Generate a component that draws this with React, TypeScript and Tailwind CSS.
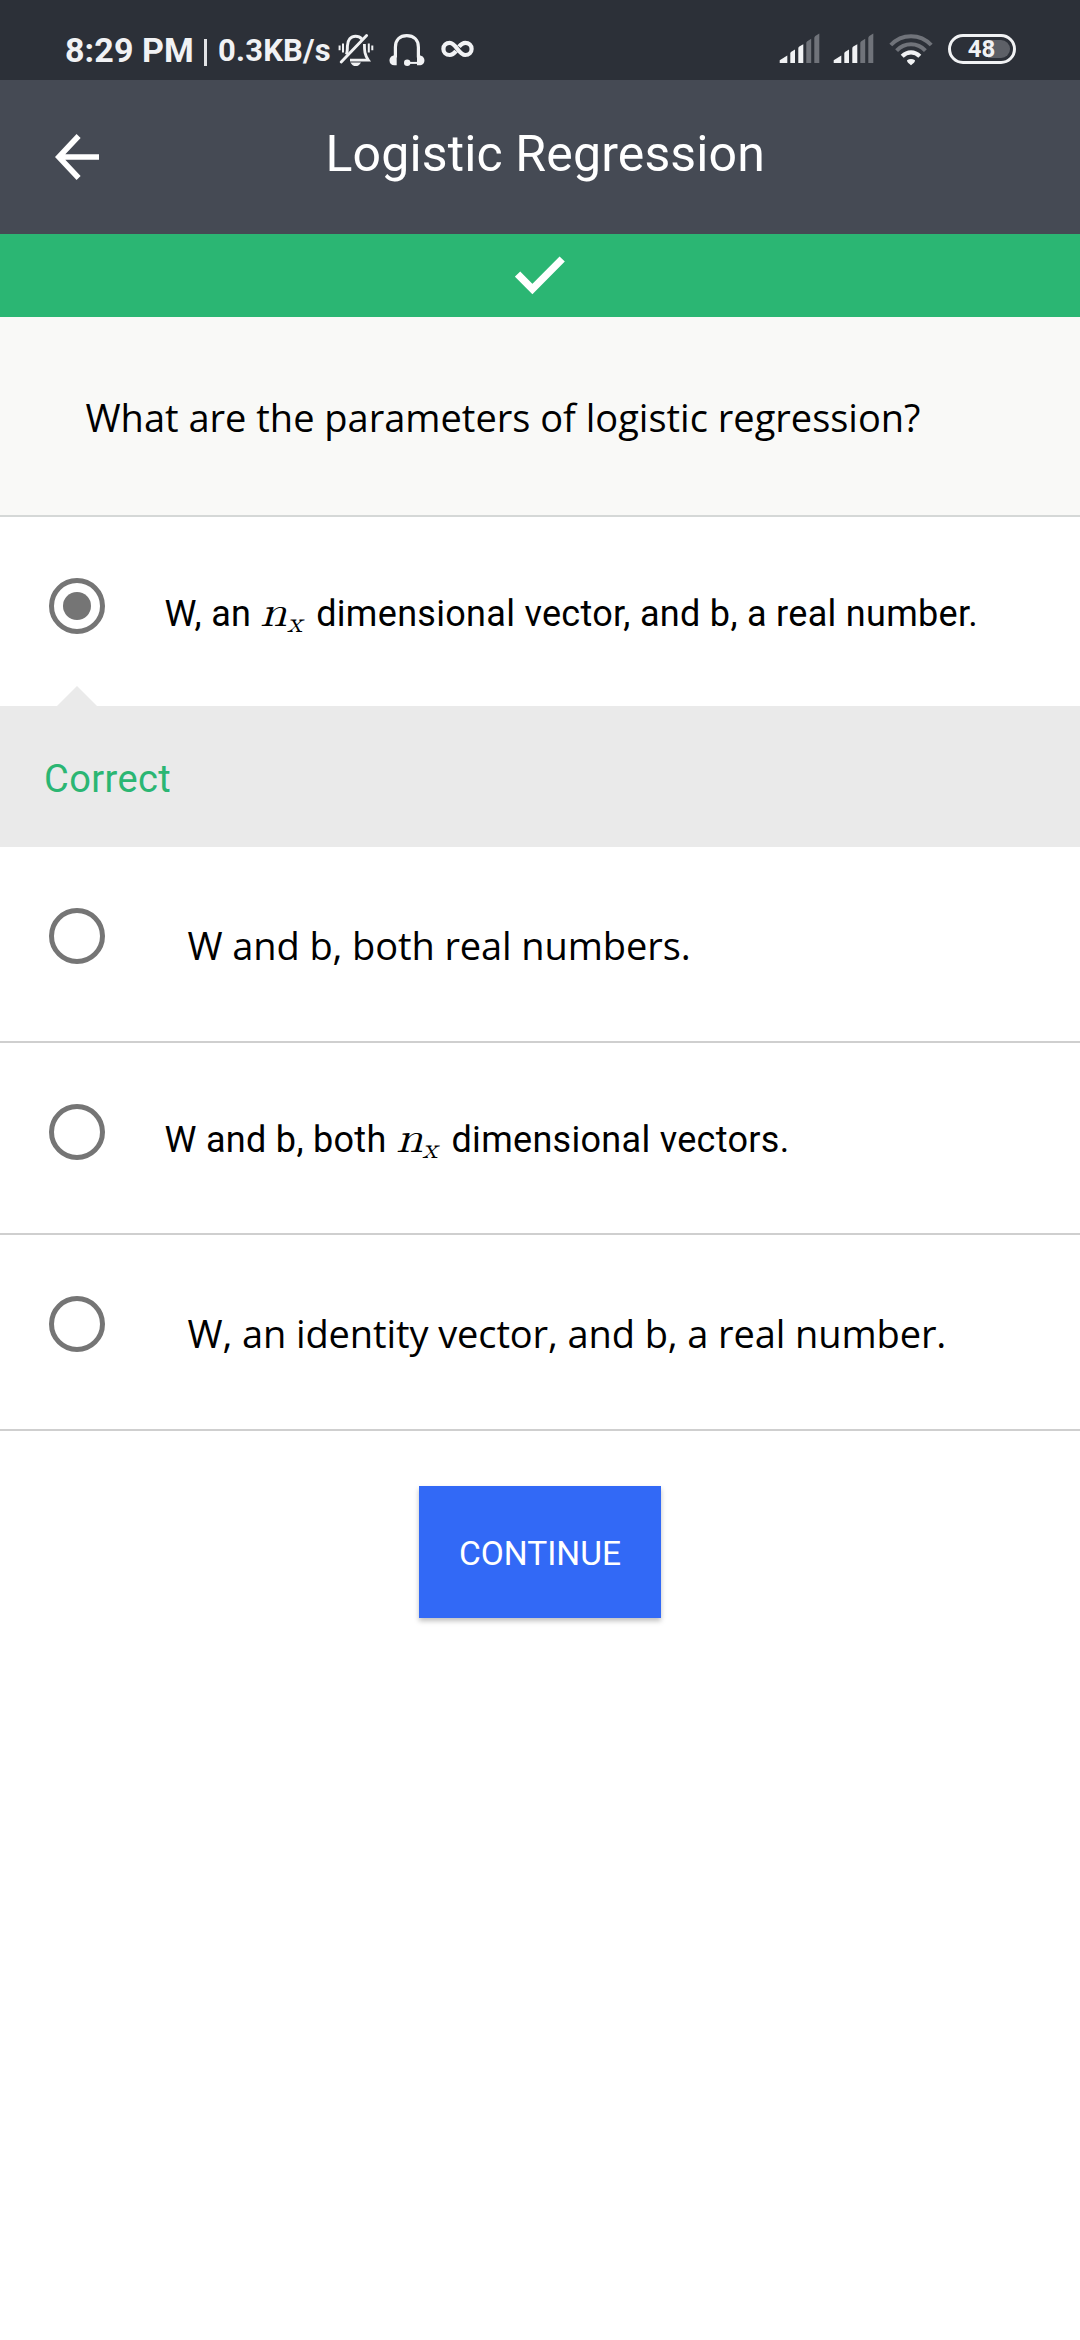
import type { ReactNode } from "react";

function SignalBars() {
  return (
    <svg width="42" height="31" viewBox="0 0 42 31">
      <path d="M0.7 30V27.2L8.3 22.6V30Z" fill="#f1f2f4" />
      <path d="M11.3 30V20.6Q11.3 19.4 12.3 18.8L16 16.6V30Z" fill="#f1f2f4" />
      <path d="M19.3 30V15.4Q19.3 14.2 20.3 13.6L24.3 11.2V30Z" fill="#f1f2f4" />
      <path d="M27.3 30V10Q27.3 8.8 28.3 8.2L32.2 5.8V30Z" fill="#70737a" />
      <path d="M35.3 30V5Q35.3 3.8 36.3 3L40.3 0.4V30Z" fill="#70737a" />
    </svg>
  );
}

function MutedBell() {
  return (
    <svg width="36" height="34" viewBox="0 0 36 34" fill="none" stroke="#f1f2f4">
      <path d="M8.4 21.5C9.4 19 9.4 16 9.4 13C9.4 6.8 13 3.2 17.6 3.2C20 3.2 22.3 4.2 23.8 6" strokeWidth="2.9" />
      <path d="M26.4 11C26.4 18 26.6 21.6 30.4 27.2H12" strokeWidth="2.8" />
      <path d="M3.2 29L28.6 2.6" strokeWidth="2.9" strokeLinecap="round" />
      <path d="M12.4 29.4H23Q21 33 17.7 33Q14.4 33 12.4 29.4Z" fill="#f1f2f4" stroke="none" />
      <path d="M1.6 12.4V17.2M5 10.4V19.4M30.8 10.4V19.4M34.3 12.4V17.2" strokeWidth="2" />
    </svg>
  );
}

function Headset() {
  return (
    <svg width="36" height="34" viewBox="0 0 36 34" fill="none" stroke="#f1f2f4">
      <path d="M6.4 24.6V14.2C6.4 6.6 11 2.6 17.8 2.6C24.6 2.6 29.4 6.6 29.4 14.2V24.6" strokeWidth="3.2" />
      <path d="M7.7 22.4V32.2H5.4C2.4 32.2 0.5 30.2 0.5 27.4C0.5 24.6 2.4 22.4 5.2 22.4Z" fill="#f1f2f4" stroke="none" />
      <path d="M28 22.4V32.2H30.4C33.4 32.2 35.4 30.2 35.4 27.4C35.4 24.6 33.4 22.4 30.6 22.4Z" fill="#f1f2f4" stroke="none" />
      <path d="M18 29.9H29" strokeWidth="2" />
      <circle cx="18.2" cy="29.8" r="3.2" fill="#f1f2f4" stroke="none" />
    </svg>
  );
}

function InfinityMark() {
  return (
    <svg width="33" height="18" viewBox="0 0 33 18" fill="none" stroke="#f1f2f4" strokeWidth="4.2">
      <path d="M15 11.2C13 13.6 11.4 15 8.8 15C5 15 2.4 12.3 2.4 8.9C2.4 5.5 5 2.8 8.8 2.8C15 2.8 17.6 15 24.2 15C28 15 30.6 12.3 30.6 8.9C30.6 5.5 28 2.8 24.2 2.8C21.6 2.8 20 4.2 18 6.6" />
    </svg>
  );
}

function Wifi() {
  return (
    <svg width="44" height="32" viewBox="0 0 44 32" fill="none">
      <path d="M1.8 11C12.8 -0.8 31.2 -0.8 42.2 11" stroke="#70737a" strokeWidth="4" />
      <path d="M7.6 16.6C15.6 8.2 28.4 8.2 36.4 16.6" stroke="#70737a" strokeWidth="4" />
      <path d="M13.2 22.2C18.4 17 25.6 17 30.8 22.2" stroke="#f1f2f4" strokeWidth="4.2" />
      <path d="M18 26.3Q22 23.6 26 26.3Q26 28.6 22 31.2Q18 28.6 18 26.3Z" fill="#f1f2f4" />
    </svg>
  );
}

function StatusBar() {
  return (
    <div className="flex h-20 items-start bg-[#2c3038] text-[#f1f2f4]">
      <span className="ml-[65px] mt-[30px] w-[131px] text-[34px] leading-[40px] font-bold tracking-[0.1px] whitespace-nowrap">
        8:29 PM
      </span>
      <span className="ml-2 mt-[39px] h-[27px] w-[3px] bg-[#e2e3e6]" />
      <span className="ml-[11px] mt-[31px] w-[112px] text-[31px] leading-[40px] font-bold tracking-[0.2px] whitespace-nowrap">
        0.3KB/s
      </span>
      <span className="ml-[8px] mt-[33px]"><MutedBell /></span>
      <span className="ml-[15px] mt-[33px]"><Headset /></span>
      <span className="ml-[16px] mt-[40px]"><InfinityMark /></span>
      <span className="ml-auto mt-[33px]"><SignalBars /></span>
      <span className="ml-[12px] mt-[33px]"><SignalBars /></span>
      <span className="ml-[14px] mt-[34px]"><Wifi /></span>
      <span className="mr-[64px] ml-[15px] mt-[34px] flex h-[30px] w-[68px] items-center justify-center rounded-full border-[3px] border-[#f1f2f4] bg-[linear-gradient(90deg,#2c3038_60%,#5d6067_60%)] bg-clip-content p-[3px] text-[24px] leading-none font-bold">
        <span className="pr-[1px]">48</span>
      </span>
    </div>
  );
}

function Radio({ checked = false }: { checked?: boolean }) {
  return (
    <span className="mt-[61px] ml-[49px] flex size-14 shrink-0 items-center justify-center rounded-full border-[5.5px] border-[#757575]">
      {checked && <span className="size-7 rounded-full bg-[#757575]" />}
    </span>
  );
}

function Nx() {
  return (
    <span className="inline-block w-[46.5px] font-['Latin_Modern_Math','Liberation_Serif',serif] tracking-normal italic">
      <span className="inline-block w-[26.5px] origin-left scale-x-[1.12] text-[43px] leading-none">n</span>
      <span className="relative top-[6px] inline-block text-[29px] leading-none">x</span>
    </span>
  );
}

type OptionProps = { checked?: boolean; row: string; text: string; children: ReactNode };

function Option({ checked, row, text, children }: OptionProps) {
  return (
    <div className={`flex items-start ${row}`}>
      <Radio checked={checked} />
      <p className={`whitespace-nowrap ${text}`}>{children}</p>
    </div>
  );
}

const roboto = "ml-[59.5px] text-[36px] tracking-[0.3px]";
const openSans = "ml-[82.5px] font-['Open_Sans',sans-serif] text-[38px] tracking-[-0.1px]";

export default function App() {
  return (
    <div className="flex h-[2340px] w-[1080px] flex-col bg-white font-['Roboto',sans-serif] text-black">
      <StatusBar />
      <header className="flex h-[154px] items-center bg-[#454a54] text-white">
        <svg className="ml-[55px]" width="46" height="46" viewBox="0 0 46 46" fill="none" stroke="currentColor" strokeWidth="5.6">
          <path d="M44 23H5M23.6 2L3.8 23L23.6 44" />
        </svg>
        <h1 className="ml-[224.5px] pb-[7px] text-[50px] leading-[60px] tracking-[0.14px] whitespace-nowrap">Logistic Regression</h1>
      </header>
      <div className="flex h-[83px] items-center justify-center bg-[#2bb673]">
        <svg width="50" height="40" viewBox="0 0 50 40" fill="none" stroke="#fff" strokeWidth="7.4">
          <path d="M2.6 18L17.4 33L47.2 3" />
        </svg>
      </div>
      <div className="flex h-[200px] items-center border-b-2 border-[#d5d8d7] bg-[#f9f9f7] pt-[2px] pl-[85.5px]">
        <p className="font-['Open_Sans',sans-serif] text-[38px] leading-[52px] whitespace-nowrap">
          What are the parameters of logistic regression?
        </p>
      </div>
      <Option checked row="h-[189px]" text={`${roboto} leading-[195px]`}>
        W, an <Nx /> dimensional vector, and b, a real number.
      </Option>
      <div className="relative flex h-[141px] items-center bg-[#eaeaea] pt-[4px] pl-[44px]">
        <svg className="absolute -top-5 left-[57px]" width="40" height="20" viewBox="0 0 40 20">
          <path d="M20 0L40 20H0Z" fill="#eaeaea" />
        </svg>
        <p className="text-[38px] leading-[46px] tracking-[0.4px] text-[#2bb673]">Correct</p>
      </div>
      <Option row="h-[196px] border-b-2 border-[#cfcfcf]" text={`${openSans} leading-[196px]`}>
        W and b, both real numbers.
      </Option>
      <Option row="h-[192px] border-b-2 border-[#cfcfcf]" text={`${roboto} leading-[195px]`}>
        W and b, both <Nx /> dimensional vectors.
      </Option>
      <Option row="h-[196px] border-b-2 border-[#cfcfcf]" text={`${openSans} leading-[196px]`}>
        W, an identity vector, and b, a real number.
      </Option>
      <button className="mt-[55px] h-[132px] w-[242px] self-center bg-[#3269f6] pt-[3px] text-[33.5px] leading-[40px] text-white shadow-[0_3px_5px_rgba(0,0,0,0.25)]">
        CONTINUE
      </button>
    </div>
  );
}
